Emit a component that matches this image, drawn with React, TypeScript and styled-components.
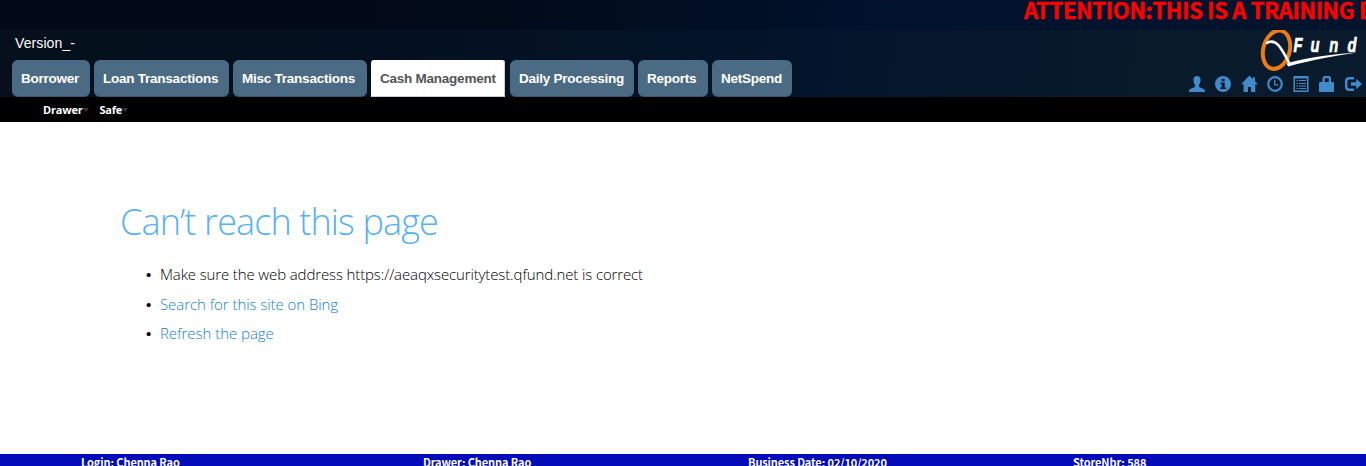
import React from "react";
import styled, { createGlobalStyle } from "styled-components";

const GlobalStyle = createGlobalStyle`
  * { box-sizing: border-box; }
  html, body { margin: 0; padding: 0; background: #fff; overflow: hidden; }
  a { text-decoration: none; color: inherit; }
`;

const Page = styled.div`
  display: flex;
  flex-direction: column;
  height: 466px;
  overflow: hidden;
  font-family: "Liberation Sans", Arial, sans-serif;
`;

const Notice = styled.div`
  height: 30px;
  flex: none;
  overflow: hidden;
  padding-left: 1024px;
  background: linear-gradient(95deg, #010818 0%, #010a18 35%, #01122d 65%, #03152d 100%);
  color: #ff0000;
  font: 700 22px/18px "Noto Sans CJK SC", sans-serif;
  letter-spacing: -0.31px;
  -webkit-text-stroke: 0.5px #ff0000;
  white-space: nowrap;
`;

const Header = styled.header`
  height: 67px;
  flex: none;
  display: flex;
  justify-content: space-between;
  background: linear-gradient(95deg, #05101c 0%, #04101f 30%, #03152c 60%, #091a2b 85%, #091b2d 100%);
`;

const Left = styled.div`
  display: flex;
  flex-direction: column;
  justify-content: space-between;
  padding-left: 12px;
`;

const Version = styled.div`
  padding: 5px 0 0 3px;
  color: #fff;
  font-size: 14px;
  line-height: 17px;
  letter-spacing: 0.1px;
`;

const Tabs = styled.nav`
  display: flex;
`;

const Tab = styled.a<{ $w: number; $gap?: number; $active?: boolean }>`
  width: ${(p) => p.$w}px;
  height: 37px;
  margin-right: ${(p) => p.$gap ?? 4}px;
  padding-left: 9px;
  border-radius: ${(p) => (p.$active ? "3px 3px 0 0" : "6px")};
  border-bottom: 1px solid ${(p) => (p.$active ? "#c5cbd0" : "#37566f")};
  background: ${(p) => (p.$active ? "#fff" : "#4b6a83")};
  box-shadow: ${(p) => (p.$active ? "inset -1px 0 #c9ced3" : "none")};
  color: ${(p) => (p.$active ? "#555" : "#fff")};
  font-size: 13.5px;
  font-weight: 700;
  line-height: 37px;
  letter-spacing: -0.24px;
  white-space: nowrap;
`;

const Right = styled.div`
  display: flex;
  flex-direction: column;
  align-items: flex-end;
`;

const LogoArt = styled.svg`
  display: block;
  width: 106px;
  height: 42px;
`;

const Tools = styled.div`
  display: flex;
  gap: 10px;
  padding: 4px 5px 0 0;
  color: #428bca;
`;

const Glyph = styled.svg`
  display: block;
  width: 16px;
  height: 16px;
  overflow: visible;
  fill: currentColor;
`;

const Submenu = styled.nav`
  height: 25px;
  flex: none;
  display: flex;
  gap: 11px;
  padding-left: 43px;
  background: #000;
`;

const MenuItem = styled.a`
  display: flex;
  align-items: center;
  color: #fff;
  font: 700 11px/25px "Open Sans", sans-serif;
  letter-spacing: -0.2px;

  &::after {
    content: "";
    border: 3px solid transparent;
    border-top: 4px solid #383838;
    border-bottom: 0;
  }
`;

const Content = styled.main`
  flex: 1;
  padding: 76px 0 0 120px;
  font-family: "Open Sans", "Noto Sans", sans-serif;
  font-weight: 300;
`;

const Title = styled.h1`
  margin: 0;
  color: #56b0fa;
  font-size: 36px;
  font-weight: 300;
  line-height: 48px;
  letter-spacing: -0.88px;
`;

const Hints = styled.ul`
  margin: 14px 0 0;
  padding: 0 0 0 26px;
  list-style: none;
  color: #000;
  font-size: 15px;
  line-height: 29.5px;
`;

const Hint = styled.li<{ $tracking: number }>`
  display: flex;
  letter-spacing: ${(p) => p.$tracking}px;

  &::before {
    content: "•";
    width: 14px;
    font: 15px/29.5px "Liberation Sans", sans-serif;
  }
`;

const HintLink = styled.a`
  color: #1382d7;
`;

const Status = styled.footer`
  height: 12px;
  flex: none;
  display: grid;
  grid-template-columns: 342px 325px 325px auto;
  padding-left: 81px;
  overflow: hidden;
  background: #040cba;
  color: #fff;
  font: 700 11px/17px "Noto Sans CJK SC", sans-serif;
  letter-spacing: -0.11px;
  white-space: nowrap;
`;

const tabs = [
  { label: "Borrower", w: 78 },
  { label: "Loan Transactions", w: 135 },
  { label: "Misc Transactions", w: 134 },
  { label: "Cash Management", w: 134, gap: 5, active: true },
  { label: "Daily Processing", w: 124 },
  { label: "Reports", w: 70 },
  { label: "NetSpend", w: 80 },
];

const icons = [
  <path d="M8 0C5.4 0 4.3 1.7 4.4 4.2c.1 2 .8 3.5 1.7 4.5v1.8C5.500 12 .3 12.200 0 14.800V16h16v-1.200c-.3-2.600-5.500-2.800-6.100-4.300V8.700c.9-1 1.600-2.500 1.700-4.500C11.700 1.700 10.600 0 8 0z" />,
  <path fillRule="evenodd" d="M8 0a8 8 0 1 1 0 16A8 8 0 0 1 8 0zM6.600 2.800v2.400h3V2.800zM5.200 6.400v1.400h1.500v3.600H5.200v1.500h6v-1.500H9.700v-5z" />,
  <path d="M8.500-.4L0 8.300h2.600V16H7v-5h3v5h4.300V8.300H17l-3-3V1.200h-2v2z" />,
  <g fill="none" stroke="currentColor"><circle cx="8" cy="8" r="6.800" strokeWidth="2.200" /><path d="M7.700 3.800v5h3.900" strokeWidth="1.300" /></g>,
  <path fillRule="evenodd" d="M.5 0h15v16h-15zM2 2.500v12h12v-12zM3.500 4H5v1h-1.500zM6 4h7v1H6zM3.500 7H5v1h-1.500zM6 7h7v1H6zM3.500 9.500H5v1h-1.500zM6 9.500h7v1H6zM3.500 12H5v1h-1.500zM6 12h7v1H6z" />,
  <path fillRule="evenodd" d="M5 0h5.500L12 1.500V6h2.200l.8.8V16H0V6.800L.8 6H3.500V1.500zM5.700 2.200V6h4V2.200z" />,
  <g><path d="M9 2.200H4.500Q1.200 2.200 1.200 5.200v5.600q0 3 3.300 3H9" fill="none" stroke="currentColor" strokeWidth="2.400" /><path d="M6 6.200h5.200V2.700L17 8l-5.800 5.300V9.800H6z" /></g>,
];

const Logo = () => (
  <LogoArt viewBox="1260 30 106 42">
    <ellipse cx="1276.500" cy="49.700" rx="13.200" ry="19.500" transform="rotate(15 1276.500 49.700)" fill="none" stroke="#ee7b16" strokeWidth="4" />
    <path d="M1266 43.300C1276 37.500 1281 47 1289.500 63.500L1288 65.500" fill="none" stroke="#fff" strokeWidth="2.600" />
    <path d="M1287 63L1289.500 62.600C1312 57 1333 54 1356 52.800C1334 56 1313 60 1288 66.400z" fill="#fff" />
    <text transform="translate(0 51.800) scale(.7 1)" x="1848 1872 1899 1925" y="0" fill="#fff" stroke="#fff" strokeWidth=".7" fontFamily="Liberation Sans Narrow, Liberation Sans, sans-serif" fontSize="21" fontStyle="italic" fontWeight="700">Fund</text>
  </LogoArt>
);

export default function App() {
  return (
    <Page>
      <GlobalStyle />
      <Notice>ATTENTION:THIS IS A TRAINING ENVIRONMENT</Notice>
      <Header>
        <Left>
          <Version>Version_-</Version>
          <Tabs>
            {tabs.map((t) => (
              <Tab key={t.label} $w={t.w} $gap={t.gap} $active={t.active}>{t.label}</Tab>
            ))}
          </Tabs>
        </Left>
        <Right>
          <Logo />
          <Tools>
            {icons.map((shape, i) => <Glyph key={i} viewBox="0 0 16 16">{shape}</Glyph>)}
          </Tools>
        </Right>
      </Header>
      <Submenu>
        <MenuItem>Drawer</MenuItem>
        <MenuItem>Safe</MenuItem>
      </Submenu>
      <Content>
        <Title>Can’t reach this page</Title>
        <Hints>
          <Hint $tracking={-0.125}>Make sure the web address https://aeaqxsecuritytest.qfund.net is correct</Hint>
          <Hint $tracking={-0.06}><HintLink>Search for this site on Bing</HintLink></Hint>
          <Hint $tracking={-0.04}><HintLink>Refresh the page</HintLink></Hint>
        </Hints>
      </Content>
      <Status>
        <span>Login: Chenna Rao</span>
        <span>Drawer: Chenna Rao</span>
        <span>Business Date: 02/10/2020</span>
        <span>StoreNbr: 588</span>
      </Status>
    </Page>
  );
}
